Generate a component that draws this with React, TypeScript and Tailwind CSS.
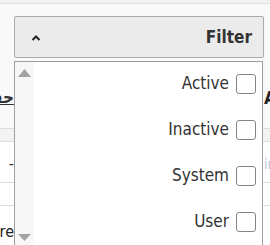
import { useState } from "react";

const options = ["Active", "Inactive", "System", "User"];

function Caret({ down }: { down?: boolean }) {
    return (
        <svg width="13" height="9" viewBox="0 0 13 9" className="block">
            {down ? <polygon points="0,1 13,1 6.5,8" fill="#a3a3a3" /> : <polygon points="6.5,1 13,9 0,9" fill="#a3a3a3" />}
        </svg>
    );
}

function App() {
    const [checked, setChecked] = useState<Record<string, boolean>>({});

    const toggle = (name: string) => {
        setChecked({ ...checked, [name]: !checked[name] });
    };

    return (
        <div className="relative h-[245px] w-[270px] overflow-hidden bg-[#f9f9f9] font-['DejaVu_Sans_Condensed','DejaVu_Sans',sans-serif] text-[#333]">
            <div className="h-[4px] border-b border-[#e2e2e2] bg-[#f1f1f1]" />

            <div className="px-[14px] pt-[12px]">
                <button className="flex h-[42px] w-[250px] items-center justify-between rounded-[2px] border border-[#aaaaaa] bg-[#ebebeb] pl-[16px] pr-[11px]">
                    <svg width="10" height="6" viewBox="0 0 10 6" className="mt-[2px] block">
                        <polyline points="1.5,5 5,1.5 8.5,5" fill="none" stroke="#222" strokeWidth="2" />
                    </svg>
                    <span className="text-[17px] font-bold leading-none text-[#333]">Filter</span>
                </button>
            </div>

            {/* table behind the menu */}
            <div className="mt-[1px] flex flex-col">
                <div className="flex h-[70px] items-center justify-between border-b border-[#dddddd] pt-[8px]">
                    <div className="flex w-[14px] justify-end overflow-hidden whitespace-nowrap text-[17px] font-bold underline">حفظ</div>
                    <div className="w-[6px] overflow-hidden whitespace-nowrap text-[18px] font-bold text-[#222]">Actions</div>
                </div>
                <div className="h-[13px] border-b border-[#dddddd] bg-[#f3f3f3]" />
                <div className="flex h-[41px] items-center justify-between border-b border-[#dddddd] bg-white pt-[4px]">
                    <div className="flex w-[14px] justify-end whitespace-nowrap text-[16px]">-</div>
                    <div className="w-[6px] overflow-hidden whitespace-nowrap text-[14px] text-[#b9c7d8]">ino</div>
                </div>
                <div className="h-[23px] border-b border-[#dddddd] bg-white" />
                <div className="flex h-[40px] items-end justify-between bg-white pb-[2px]">
                    <div className="flex w-[14px] justify-end overflow-hidden whitespace-nowrap text-[16px] text-[#222]">Expire</div>
                    <div className="w-[6px]" />
                </div>
            </div>

            {/* dropdown menu */}
            <div className="absolute left-[14px] top-[61px] flex h-[190px] w-[249px] border border-[#a0a0a0] bg-white">
                <div className="flex w-[19px] flex-col items-center justify-between bg-[#f7f7f7] pb-[8px] pt-[6px]">
                    <Caret />
                    <Caret down />
                </div>
                <div className="flex flex-1 flex-col gap-[26px] pr-[6px] pt-[12px]">
                    {options.map((name) => (
                        <label key={name} className="flex h-[20px] cursor-pointer items-center justify-end gap-[7px] text-[17px] text-[#333]">
                            <span>{name}</span>
                            <span
                                onClick={() => toggle(name)}
                                className="block h-[20px] w-[20px] rounded-[3px] border border-[#858585] bg-white"
                            />
                        </label>
                    ))}
                </div>
            </div>
        </div>
    );
}

export default App;
